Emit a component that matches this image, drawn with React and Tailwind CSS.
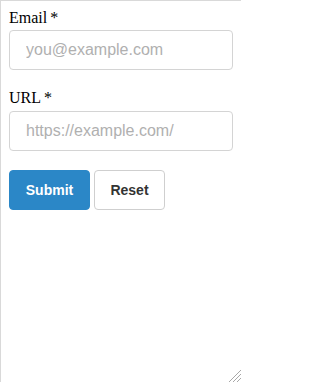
import React from "react";

export default function App() {
  return (
    <div className="relative w-[241px] h-[382px] overflow-hidden bg-white border-l border-t border-[#d9d9d9]">
      <form
        className="pt-[8px] pl-[8px] pr-[8px]"
        onSubmit={(e) => e.preventDefault()}
      >
        <label
          htmlFor="email"
          className="block text-[16px] leading-[18px] text-black mb-[3px] font-['Liberation_Serif',serif]"
        >
          Email<span className="ml-[3px]">*</span>
        </label>
        <input
          id="email"
          type="email"
          placeholder="you@example.com"
          className="block w-[224px] h-[40px] px-4 rounded-[4px] border border-[#d4d4d4] bg-white text-[16px] text-[#333] placeholder:text-[#b0b0b0] outline-none font-['Liberation_Sans',Arial,sans-serif] mb-[19px]"
        />
        <label
          htmlFor="url"
          className="block text-[16px] leading-[18px] text-black mb-[4px] font-['Liberation_Serif',serif]"
        >
          URL<span className="ml-[3px]">*</span>
        </label>
        <input
          id="url"
          type="url"
          placeholder="https://example.com/"
          className="block w-[224px] h-[40px] px-4 rounded-[4px] border border-[#d4d4d4] bg-white text-[16px] text-[#333] placeholder:text-[#b0b0b0] outline-none font-['Liberation_Sans',Arial,sans-serif] mb-[19px]"
        />
        <div className="flex gap-1">
          <button
            type="submit"
            className="h-[40px] w-[81px] rounded-[4px] border border-[#2b87c7] bg-[#2b87c7] text-white text-[14px] font-bold font-['Liberation_Sans',Arial,sans-serif]"
          >
            Submit
          </button>
          <button
            type="reset"
            className="h-[40px] w-[71px] rounded-[4px] border border-[#cfcfcf] bg-white text-[#333] text-[14px] font-bold font-['Liberation_Sans',Arial,sans-serif]"
          >
            Reset
          </button>
        </div>
      </form>
      <svg
        className="absolute right-0 bottom-0"
        width="13"
        height="13"
        viewBox="0 0 13 13"
      >
        <line x1="13" y1="1" x2="1" y2="13" stroke="#a8a8a8" strokeWidth="1" />
        <line x1="13" y1="5" x2="5" y2="13" stroke="#a8a8a8" strokeWidth="1" />
        <line x1="13" y1="9" x2="9" y2="13" stroke="#a8a8a8" strokeWidth="1" />
      </svg>
    </div>
  );
}
